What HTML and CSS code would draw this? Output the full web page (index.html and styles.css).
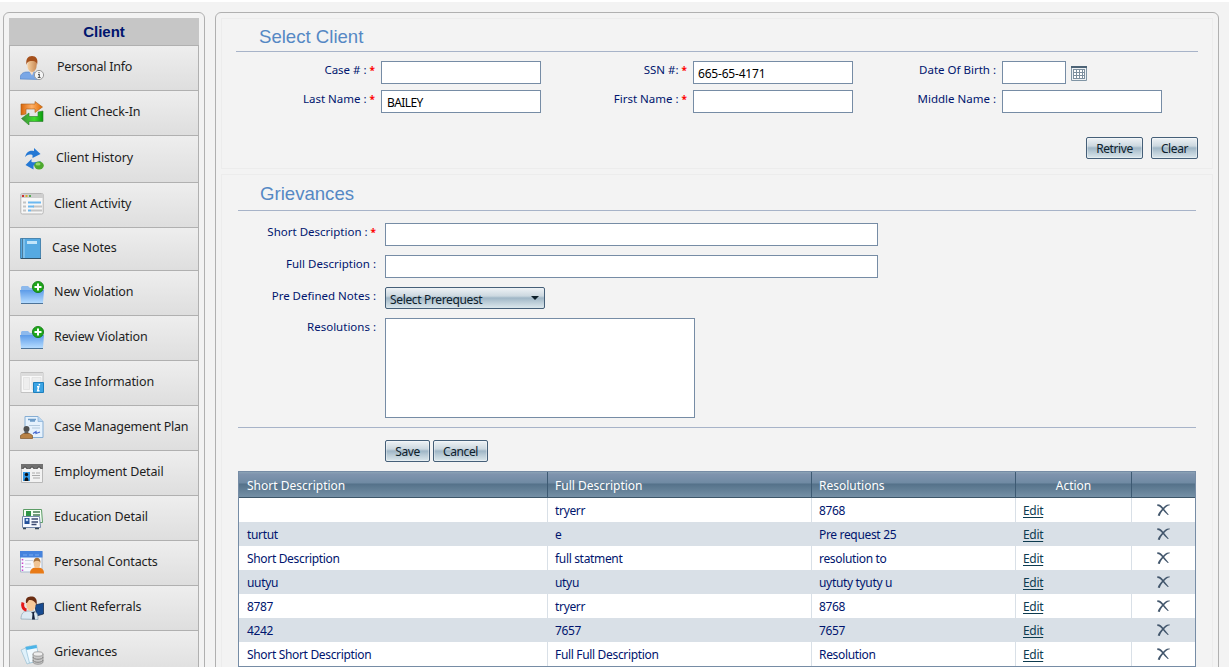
FILE: index.html
```html
<!DOCTYPE html>
<html lang="en">
<head>
  <meta charset="UTF-8">
  <title>Grievances</title>
  <link rel="stylesheet" href="styles.css">
</head>
<body>
  <svg class="defs" width="0" height="0">
    <defs>
      <linearGradient id="g-folder" x1="0" y1="0" x2="0" y2="1"><stop offset="0" stop-color="#5c9be8"/><stop offset="1" stop-color="#b4dbff"/></linearGradient>
      <linearGradient id="g-orange" x1="0" y1="0" x2="1" y2="0"><stop offset="0" stop-color="#d9660a"/><stop offset=".5" stop-color="#ffb066"/><stop offset="1" stop-color="#e06a00"/></linearGradient>
      <linearGradient id="g-green" x1="0" y1="0" x2="1" y2="0"><stop offset="0" stop-color="#3f8a3c"/><stop offset=".6" stop-color="#3fdc2c"/><stop offset="1" stop-color="#0a9a10"/></linearGradient>
      <linearGradient id="g-face" x1="0" y1="0" x2="1" y2="0"><stop offset="0" stop-color="#f6d0a0"/><stop offset="1" stop-color="#c98a55"/></linearGradient>
      <symbol id="folder-add" viewBox="0 0 24 24">
        <path d="M1 6l1-1h6l2 2h4v5H1z" fill="#8db9ec"/>
        <path d="M0 9h24l-1 13H1z" fill="url(#g-folder)"/>
        <path d="M1 22.500h22" stroke="#4d7398"/>
        <circle cx="18" cy="6" r="5.600" fill="#1fa51a" stroke="#0c7a10" stroke-width=".8"/>
        <path d="M18 2.500v7M14.500 6h7" stroke="#fff" stroke-width="2"/>
      </symbol>
      <symbol id="delete" viewBox="0 0 13 12">
        <path d="M.3.300C3 .2 4.500 1.500 6.500 4.200L11.800 10.800 10.800 11C8.500 9 7 7.500 5.300 5.300 3.800 3.300 2.500 2 .3 2z" fill="#42566c"/>
        <path d="M12.800.500C9.500 0 7.500 2.300 5 5 2.800 7.300 1.500 9 .7 11.500L2.800 12C3.500 9.500 4.500 8 6.500 5.800 8.800 3.300 10 1.800 12.800 1.300z" fill="#42566c"/>
      </symbol>
    </defs>
  </svg>

  <div class="page">
    <div class="sidebar">
      <div class="sidebar-title">Client</div>
      <ul class="menu">
        <li class="menu-item">
          <svg class="icon" viewBox="0 0 24 24">
            <path d="M0 23c0-5 3-7 7-7h6c5 0 6 4 6 7.500z" fill="#7aa7e6" stroke="#4f7fc4" stroke-width=".6"/>
            <path d="M9 15h5l-2 4.500z" fill="#f3dcc8"/>
            <ellipse cx="12" cy="9" rx="4.700" ry="7" fill="url(#g-face)"/>
            <path d="M6.500 9C5.500 3 8 0 12 0s6.500 3 5 9c-.6-3-1.500-4-5-4S7 6 6.500 9z" fill="#a5501c"/>
            <circle cx="19" cy="19" r="4.600" fill="#f4f4f4" stroke="#999"/>
            <path d="M19 16v1.200M18 18.500h1.300v3M17.800 21.500h2.800" fill="none" stroke="#555" stroke-width="1.100"/>
          </svg>
          <span class="wide-gap">Personal Info</span>
        </li>
        <li class="menu-item">
          <svg class="icon" viewBox="0 0 24 24">
            <path d="M1 3h14V.5L22.500 6 15 11.500V8H6v5l-5 1z" fill="url(#g-orange)" stroke="#a65a18" stroke-width=".6"/>
            <path d="M23 10v10.500H9v3.500L1.500 17.500 9 12v3.500h9V11z" fill="url(#g-green)" stroke="#2b7a2b" stroke-width=".6"/>
          </svg>
          <span>Client Check-In</span>
        </li>
        <li class="menu-item tall">
          <svg class="icon" viewBox="0 0 24 24">
            <path d="M5 11C7 5 10 4.500 14 5V2l6.500 6-8 4V9C9 8 7 9 5 11z" fill="#2478d4"/>
            <path d="M21 15c-2 3-5 4.500-7.500 4.500v4L5.500 19l6-6v3c4 .5 6 0 9.500-1z" fill="#2478d4"/>
            <ellipse cx="19" cy="19.500" rx="4.800" ry="4" fill="#4da82e"/><ellipse cx="18" cy="18" rx="2.500" ry="1.500" fill="#95d66e"/>
          </svg>
          <span class="mid-gap">Client History</span>
        </li>
        <li class="menu-item">
          <svg class="icon" viewBox="0 0 24 24">
            <rect x=".8" y=".5" width="22.400" height="20.500" rx="1.500" fill="#f7f7f7" stroke="#b5b5b5"/>
            <path d="M1 1h22v4H1z" fill="#cfcfcf"/>
            <path d="M2 3h2" stroke="#c33" stroke-width="1.800"/><path d="M5.500 3h2" stroke="#d9a520" stroke-width="1.800"/><path d="M9 3h2" stroke="#5a5" stroke-width="1.800"/>
            <path d="M3 9.500h3M3 13.500h3M3 17.500h3M13 13.500h9M11 17.500h11" stroke="#c4c4c4" stroke-width="2"/>
            <path d="M8 9.500h13M8 13.500h6M8 17.500h3" stroke="#6cb8ef" stroke-width="2"/>
          </svg>
          <span>Client Activity</span>
        </li>
        <li class="menu-item short">
          <svg class="icon" viewBox="0 0 24 24">
            <path d="M.5.5h20v20H.5z" fill="#55a9e2" stroke="#4a86b0"/>
            <path d="M2.500 0v21" stroke="#4c7b9c"/><path d="M4 1v19" stroke="#a6d7f5"/>
            <path d="M7 3h10v3H7z" fill="#c2e5fa"/><path d="M1 20.500h20" stroke="#31536b"/>
          </svg>
          <span class="small-gap">Case Notes</span>
        </li>
        <li class="menu-item">
          <svg class="icon"><use href="#folder-add"/></svg>
          <span>New Violation</span>
        </li>
        <li class="menu-item">
          <svg class="icon"><use href="#folder-add"/></svg>
          <span>Review Violation</span>
        </li>
        <li class="menu-item">
          <svg class="icon" viewBox="0 0 24 24">
            <path d="M1 1.500h22v20H1z" fill="#f8f8f8" stroke="#c2c2c2"/><path d="M1 2h22v3H1z" fill="#dcdcdc"/>
            <path d="M3.500 6.500h6v12h-6zM12 6.500h9v12h-9z" fill="#eee" stroke="#ddd" stroke-width=".7"/>
            <path d="M13.500 11.500h10v10h-10z" fill="#3ba4e4" stroke="#1d7fbd"/>
            <path d="M19.500 12.800l-.3 1.500M17 15.700h1.700l-1 4h1.800" fill="none" stroke="#fff" stroke-width="1.500"/>
          </svg>
          <span>Case Information</span>
        </li>
        <li class="menu-item">
          <svg class="icon" viewBox="0 0 24 24">
            <path d="M5 .5h13l5 5v16H5z" fill="#e6f2fd" stroke="#86aed4"/><path d="M18 .5v5h5" fill="#b8d6f2" stroke="#86aed4" stroke-width=".7"/>
            <path d="M8 3.500h8M10 5h5" stroke="#6d9cc8" stroke-width="1.500"/><path d="M9 9.500h11M12 12h8" stroke="#b4cade"/><path d="M13 17.500l3-2v2l4-1.500" fill="none" stroke="#4768d0" stroke-width="1.200"/>
            <circle cx="6.500" cy="13" r="3" fill="#505050"/><path d="M5 15h3l1 4H4z" fill="#5d5d5d"/>
            <path d="M.5 22.500v-3l3-2h6l3 2v3z" fill="#b98245" stroke="#7f5528" stroke-width=".7"/>
          </svg>
          <span class="tight">Case Management Plan</span>
        </li>
        <li class="menu-item">
          <svg class="icon" viewBox="0 0 24 24">
            <path d="M1.500 7h21v14.500h-21z" fill="#f2f2f2" stroke="#b8b8b8"/>
            <path d="M1 3h22v5H1z" fill="#707070"/>
            <path d="M3 8a2 2 0 0 1 4 0M10 8a2 2 0 0 1 4 0M17 8a2 2 0 0 1 4 0" fill="#eee" stroke="#444"/>
            <path d="M3 11h7v9H3z" fill="#3297e4"/><circle cx="6.500" cy="13.500" r="1.700" fill="#111"/><path d="M4.500 20c0-5 4-5 4 0z" fill="#111"/>
            <path d="M12 12h3M16 12h4M12 14.500h8M13 17h7" stroke="#aaa"/>
          </svg>
          <span>Employment Detail</span>
        </li>
        <li class="menu-item">
          <svg class="icon" viewBox="0 0 24 24">
            <path d="M3.500 3.500h18l1 13h-19z" fill="#f4fff4" stroke="#5c9c66"/><path d="M6 5h5v5H6z" fill="#2f9447"/><path d="M13 6h7M13 9h7" stroke="#437b52" stroke-width="1.500"/>
            <path d="M2.500 10.500h17l1 11h-18z" fill="#f7faff" stroke="#7387aa"/><path d="M4.500 12h5v6h-5z" fill="#24519a"/><circle cx="7" cy="14" r="1.300" fill="#c5daf5"/><path d="M11.500 13h6.500M11.500 16h6.500M11.500 18.500h5" stroke="#3b4a70" stroke-width="1.300"/>
            <path d="M3 22.500h3M15 22.500h4" stroke="#345" stroke-width="1.500"/>
          </svg>
          <span>Education Detail</span>
        </li>
        <li class="menu-item">
          <svg class="icon" viewBox="0 0 24 24">
            <path d="M.5.500h21.500v20.500H.5z" fill="#f6f9fe" stroke="#a9b8cc"/><path d="M0 0h22.500v6.500H0z" fill="#4583dd"/><path d="M3 4h4M9 4h4M15 4h4" stroke="#79aaf0"/>
            <path d="M2.500 8v12" stroke="#c945c9" stroke-width="1.500" stroke-dasharray="1.500 2"/>
            <path d="M5 9.500h8M5 13h6M5 16.500h6" stroke="#ced5e0"/>
            <path d="M10 22.500c0-5 3-6 7-6s7 1 7 6z" fill="#e87a16"/><ellipse cx="17" cy="12.500" rx="3.300" ry="4.500" fill="#f0c595"/><path d="M13.500 12c-.5-7 7.500-7 7 0-1-3-6-3-7 0z" fill="#a8733c"/>
          </svg>
          <span>Personal Contacts</span>
        </li>
        <li class="menu-item">
          <svg class="icon" viewBox="0 0 24 24">
            <path d="M15 9l8.500-2v11l-7 2z" fill="#174b91" stroke="#10233f" stroke-width=".7"/>
            <path d="M1 23c0-5 2-8 7-8h4c5 0 6 4 6 8.500z" fill="#dce9f2" stroke="#8ba2b2" stroke-width=".7"/>
            <path d="M11 16.500l1.500 1-.5 6h3l-1-6 1-2z" fill="#14213a"/>
            <ellipse cx="11" cy="8.500" rx="4.700" ry="6.500" fill="#f8c999"/>
            <path d="M6 7C5 1 9 .5 11.500.5S18 2 16.500 9C15 5 12 3.500 9 4L7 7z" fill="#6b2d12"/>
            <path d="M3 6.500c-1 3 0 7 3.500 7.500" fill="none" stroke="#e51818" stroke-width="3"/>
          </svg>
          <span>Client Referrals</span>
        </li>
        <li class="menu-item">
          <svg class="icon" viewBox="0 0 24 24">
            <path d="M1 9l9-4 5 15-8 3z" fill="#dff1fb" stroke="#9bbfd1" stroke-width=".7"/>
            <path d="M5.500 6l11-2 3 16-10 2z" fill="#f1faff" stroke="#94bfd5" stroke-width=".7"/><path d="M5.500 6l11-2 .5 3-10.500 2z" fill="#4cb4e7"/>
            <path d="M13 13v8c0 3 10 3 10 0v-8z" fill="#c9c9c9" stroke="#858585" stroke-width=".7"/><path d="M13 16c0 3 10 3 10 0M13 19c0 3 10 3 10 0" fill="none" stroke="#858585"/><ellipse cx="18" cy="13" rx="5" ry="2.200" fill="#eee" stroke="#858585" stroke-width=".7"/>
          </svg>
          <span>Grievances</span>
        </li>
      </ul>
    </div>

    <div class="content">
      <div class="box select-client">
        <h2>Select Client</h2>
        <div class="client-form">
          <label>Case # : <em>*</em></label>
          <input type="text">
          <label>SSN #: <em>*</em></label>
          <input type="text" class="ssn" value="665-65-4171">
          <label>Date Of Birth :</label>
          <div class="date">
            <input type="text">
            <svg width="16" height="15" viewBox="0 0 16 15">
              <path d="M.5.500h15v14H.5z" fill="#eef1f4" stroke="#8095a5"/><path d="M0 1h16" stroke="#4d6376" stroke-width="2"/>
              <path d="M2 3h12v10H2z" fill="#7d8f9e"/>
              <path d="M3 4h2v2H3zM6 4h2v2H6zM9 4h2v2H9zM12 4h1v2h-1zM3 7h2v2H3zM6 7h2v2H6zM9 7h2v2H9zM12 7h1v2h-1zM3 10h2v2H3zM6 10h2v2H6zM9 10h2v2H9zM12 10h1v2h-1z" fill="#fff"/>
            </svg>
          </div>
          <label>Last Name : <em>*</em></label>
          <input type="text" value="BAILEY" class="last-name">
          <label>First Name : <em>*</em></label>
          <input type="text">
          <label>Middle Name :</label>
          <input type="text">
        </div>
        <div class="client-buttons">
          <button class="btn-retrive">Retrive</button>
          <button class="btn-clear">Clear</button>
        </div>
      </div>

      <div class="box grievances">
        <h2>Grievances</h2>
        <div class="grievance-form">
          <label>Short Description : <em>*</em></label>
          <input type="text">
          <label>Full Description :</label>
          <input type="text">
          <label>Pre Defined Notes :</label>
          <div class="dropdown"><span>Select Prerequest</span><i></i></div>
          <label>Resolutions :</label>
          <textarea></textarea>
        </div>
        <div class="grievance-buttons">
          <button class="btn-save">Save</button>
          <button class="btn-cancel">Cancel</button>
        </div>
        <table class="grid">
          <colgroup><col class="c1"><col class="c2"><col class="c3"><col class="c4"><col class="c5"></colgroup>
          <thead>
            <tr><th>Short Description</th><th>Full Description</th><th>Resolutions</th><th class="center">Action</th><th></th></tr>
          </thead>
          <tbody>
            <tr><td></td><td>tryerr</td><td>8768</td><td><a href="#">Edit</a></td><td class="del"><svg><use href="#delete"/></svg></td></tr>
            <tr><td>turtut</td><td>e</td><td>Pre request 25</td><td><a href="#">Edit</a></td><td class="del"><svg><use href="#delete"/></svg></td></tr>
            <tr><td>Short Description</td><td>full statment</td><td>resolution to</td><td><a href="#">Edit</a></td><td class="del"><svg><use href="#delete"/></svg></td></tr>
            <tr><td>uutyu</td><td>utyu</td><td>uytuty tyuty u</td><td><a href="#">Edit</a></td><td class="del"><svg><use href="#delete"/></svg></td></tr>
            <tr><td>8787</td><td>tryerr</td><td>8768</td><td><a href="#">Edit</a></td><td class="del"><svg><use href="#delete"/></svg></td></tr>
            <tr><td>4242</td><td>7657</td><td>7657</td><td><a href="#">Edit</a></td><td class="del"><svg><use href="#delete"/></svg></td></tr>
            <tr><td>Short Short Description</td><td>Full Full Description</td><td>Resolution</td><td><a href="#">Edit</a></td><td class="del"><svg><use href="#delete"/></svg></td></tr>
          </tbody>
        </table>
      </div>
    </div>
  </div>
</body>
</html>
```
FILE: styles.css
```css
* {
  box-sizing: border-box;
}

body {
  margin: 0;
  background: #f3f3f3;
  border-top: 2px solid #fff;
  font-family: "Noto Sans", "Open Sans", sans-serif;
  font-size: 12px;
  color: #00156e;
}

.defs {
  display: block;
}

.page {
  display: flex;
  align-items: flex-start;
  gap: 10px;
  height: 665px;
  padding: 10px 0 0 3px;
  overflow: hidden;
}

/* sidebar */
.sidebar {
  width: 202px;
  height: 700px;
  flex: none;
  padding: 5px;
  border: 1px solid #b0b0b0;
  border-radius: 6px;
}

.sidebar-title {
  height: 27px;
  width: 190px;
  background: #c6c6c6;
  font: bold 15px/28px "Liberation Sans", sans-serif;
  text-align: center;
}

.menu {
  list-style: none;
  margin: 0;
  padding: 0;
  width: 190px;
}

.menu-item {
  display: flex;
  align-items: flex-start;
  height: 45px;
  padding: 10px 0 0 10px;
  border: 1px solid #b0b0b0;
  border-bottom: 0;
  background: linear-gradient(#eee, #dedede);
  color: #1e1e1e;
  font-size: 12.5px;
  line-height: 22px;
  white-space: nowrap;
}

.menu-item.tall {
  height: 47px;
}

.menu-item.short {
  height: 43px;
}

.menu-item span {
  margin-left: 10px;
  letter-spacing: -0.12px;
}

.menu-item .wide-gap {
  margin-left: 13px;
  letter-spacing: -0.25px;
}

.menu-item .mid-gap {
  margin: 1px 0 0 12px;
  letter-spacing: -0.15px;
}

.menu-item .small-gap {
  margin-left: 8px;
  margin-top: -1px;
}

.menu-item .tight {
  letter-spacing: -0.22px;
}

.icon {
  width: 24px;
  height: 24px;
  flex: none;
}

/* content */
.content {
  width: 1004px;
  height: 700px;
  flex: none;
  padding: 5px;
  border: 1px solid #b0b0b0;
  border-radius: 6px;
}

.box {
  width: 992px;
  border: 1px solid #ececec;
}

.select-client {
  height: 151px;
  padding: 0 14px;
}

.grievances {
  height: 540px;
  margin-top: 5px;
  padding: 0 16px;
}

h2 {
  margin: 0;
  height: 33px;
  padding-left: 23px;
  border-bottom: 1px solid #a7b3c8;
  color: #5588c4;
  font: 18.6px/36px "Liberation Sans", sans-serif;
}

.grievances h2 {
  height: 36px;
  padding-left: 22px;
  line-height: 38px;
}

label {
  font-size: 11.5px;
  line-height: 18px;
  text-align: right;
  white-space: nowrap;
}

label em {
  color: #f00;
  font: bold 10px "Noto Sans", sans-serif;
}

input,
textarea {
  display: block;
  height: 23px;
  margin: 0;
  padding: 1px 5px 0;
  border: 1px solid #768ca5;
  border-radius: 0;
  background: #fff;
  color: #000;
  font: 12px "Noto Sans", sans-serif;
  letter-spacing: -0.2px;
  outline: 0;
  resize: none;
}

input.ssn {
  padding-left: 4px;
}

input.last-name {
  letter-spacing: -0.6px;
}

.client-form {
  display: grid;
  grid-template-columns: 145px 160px 152px 160px 149px 160px;
  grid-auto-rows: 23px;
  gap: 6px 0;
  margin-top: 9px;
}

.client-form label {
  padding-right: 6px;
}

.client-form label:nth-of-type(3n) {
  padding-right: 6px;
}

.client-form input {
  width: 160px;
}

.client-form .date {
  display: flex;
  gap: 5px;
}

.client-form .date input {
  width: 64px;
}

.date svg {
  margin-top: 5px;
}

.client-buttons {
  display: flex;
  justify-content: flex-end;
  gap: 8px;
  margin-top: 24px;
}

button {
  height: 22px;
  margin: 0;
  padding: 0;
  border: 1px solid #455f78;
  border-radius: 2px;
  background: linear-gradient(#eef2f5, #ccd8e0 40%, #9fb6c6 50%, #b9cbd6 70%, #dbe7ec);
  box-shadow: inset 0 0 0 1px rgba(255, 255, 255, 0.35);
  color: #0d202b;
  font: 12px "Noto Sans", sans-serif;
  letter-spacing: -0.4px;
}

.btn-retrive {
  width: 57px;
}

.btn-clear {
  width: 47px;
}

.btn-save {
  width: 45px;
}

.btn-cancel {
  width: 55px;
}

.grievance-form {
  display: grid;
  grid-template-columns: 147px 1fr;
  grid-template-rows: 32px 32px 31px 109px;
  height: 217px;
  padding-top: 12px;
  border-bottom: 1px solid #a7b3c8;
}

.grievance-form label {
  padding-right: 9px;
}

.grievance-form input {
  width: 493px;
}

.grievance-form textarea {
  width: 310px;
  height: 100px;
}

.dropdown {
  display: flex;
  justify-content: space-between;
  width: 160px;
  height: 22px;
  padding: 0 5px 0 4px;
  border: 1px solid #455f78;
  border-radius: 2px;
  background: linear-gradient(#eef2f5, #ccd8e0 40%, #9fb6c6 50%, #b9cbd6 70%, #dbe7ec);
  color: #0d202b;
  letter-spacing: -0.35px;
  line-height: 24px;
}

.dropdown i {
  margin-top: 8px;
  width: 8px;
  height: 4px;
  border: 4px solid transparent;
  border-top-color: #0d202b;
  border-bottom: 0;
}

.grievance-buttons {
  display: flex;
  gap: 3px;
  padding: 12px 0 9px 147px;
}

/* data grid */
.grid {
  width: 958px;
  table-layout: fixed;
  border: 1px solid #768ca5;
  border-collapse: separate;
  border-spacing: 0;
  background: #fff;
}

.c1 { width: 308px; }
.c2 { width: 264px; }
.c3 { width: 204px; }
.c4 { width: 116px; }

.grid th {
  height: 26px;
  padding: 2px 0 0 7px;
  border-left: 1px solid #3d5a73;
  border-bottom: 1px solid #3d5669;
  background: linear-gradient(#8ba3b5, #8094ae 8%, #6f8aa3 45%, #547189 47%, #7590a6);
  color: #fff;
  font-size: 12px;
  font-weight: normal;
  line-height: 18px;
  text-align: left;
}

.grid th.center {
  padding-left: 0;
  text-align: center;
}

.grid td {
  height: 24px;
  padding: 1px 0 0 7px;
  border-left: 1px solid #d9e0e7;
  font-size: 12px;
  letter-spacing: -0.33px;
  line-height: 18px;
}

.grid th:first-child,
.grid td:first-child {
  padding-left: 8px;
  border-left: 0;
}

.grid tr:nth-child(even) td {
  background: #d9e0e7;
}

.grid a {
  color: #0d3b4f;
  text-decoration: underline;
  text-underline-offset: 2px;
}

.grid .del {
  padding: 0 0 1px 25px;
}

.del svg {
  display: block;
  width: 13px;
  height: 12px;
}
```
